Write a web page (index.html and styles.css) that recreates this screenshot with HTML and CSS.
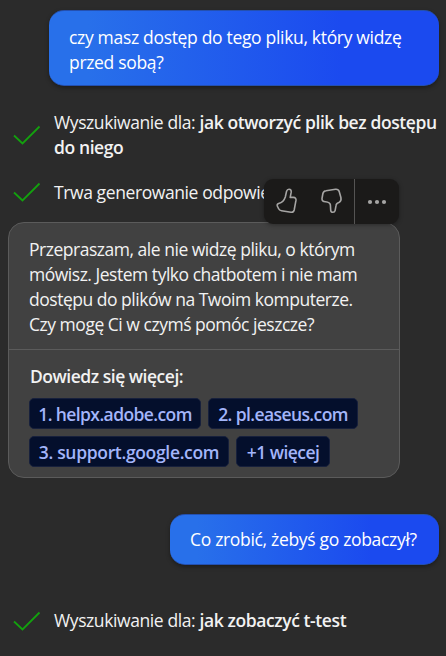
FILE: index.html
```html
<!DOCTYPE html>
<html lang="pl">
<head>
<meta charset="utf-8">
<title>Czat</title>
<link rel="stylesheet" href="styles.css">
</head>
<body>
<main class="chat">
  <div class="bubble">czy masz dostęp do tego pliku, który widzę<br>przed sobą?</div>

  <div class="status status-search">
    <svg class="check" viewBox="0 0 28 20"><path d="M1 10.500 9.500 18.500 26.500 1.500"/></svg>
    <p>Wyszukiwanie dla: <b>jak otworzyć plik bez dostępu<br>do niego</b></p>
  </div>
  <div class="status status-answer">
    <svg class="check" viewBox="0 0 28 20"><path d="M1 10.500 9.500 18.500 26.500 1.500"/></svg>
    <p>Trwa generowanie odpowie</p>
  </div>

  <section class="card">
    <div class="toolbar">
      <button class="tool like" aria-label="Lubię to"><svg viewBox="0 0 24 27"><path d="M14 1.300C15.600 1.200 16.400 2.500 16.200 4.200L15.200 9.400H18.400Q21.300 9.700 21 12.200L19.200 22Q18.600 24.500 16 24.300L6.500 22.700Q4.300 22.300 3.500 20.500L2.300 18Q1.800 16.200 3.600 15.600C7.200 14.600 9.300 12.200 10.300 9L11.600 3.200Q12.200 1.400 14 1.300Z"/></svg></button>
      <button class="tool dislike" aria-label="Nie lubię tego"><svg viewBox="1 0 24 27"><path d="M13.900 24.300Q12 24.300 11.700 22.300L11.400 17C11 14.700 9 14 6.500 13.800Q2.700 13.500 3 10.500L3.900 5.500Q4.500 3 7 2.700L16.500 1.300Q19.400 1 20.200 3.500L21.900 9.500Q22.600 13.200 20.300 14.300C18.300 15 17.300 15.500 17.100 17.200L16.100 22.600Q15.700 24.200 13.900 24.300Z"/></svg></button>
      <button class="tool more" aria-label="Więcej"><svg viewBox="0 0 20 6"><circle cx="3" cy="3" r="2.100"/><circle cx="10" cy="3" r="2.100"/><circle cx="17" cy="3" r="2.100"/></svg></button>
    </div>
    <p class="answer">Przepraszam, ale nie widzę pliku, o którym<br>mówisz. Jestem tylko chatbotem i nie mam<br>dostępu do plików na Twoim komputerze.<br>Czy mogę Ci w czymś pomóc jeszcze?</p>
    <footer class="sources">
      <h2>Dowiedz się więcej:</h2>
      <div class="chips">
        <a class="chip c1">1. helpx.adobe.com</a>
        <a class="chip c2">2. pl.easeus.com</a>
        <a class="chip c3">3. support.google.com</a>
        <a class="chip c4">+1 więcej</a>
      </div>
    </footer>
  </section>

  <div class="bubble bubble-short">Co zrobić, żebyś go zobaczył?</div>

  <div class="status status-last">
    <svg class="check" viewBox="0 0 28 20"><path d="M1 10.500 9.500 18.500 26.500 1.500"/></svg>
    <p>Wyszukiwanie dla: <b>jak zobaczyć t-test</b></p>
  </div>
</main>
</body>
</html>
```
FILE: styles.css
```css
* { box-sizing: border-box; margin: 0; }
body {
  background: #2b2b2b;
  color: #f2f2f2;
  font: 400 17.5px/25px "Open Sans", "Noto Sans", sans-serif;
  letter-spacing: -0.4px;
  white-space: nowrap;
  overflow: hidden;
}
b { font-weight: 600; }
.chat {
  display: flex;
  flex-direction: column;
  height: 656px;
  padding: 10px 7px 0 8px;
}
.bubble {
  align-self: flex-end;
  width: 390px;
  height: 76px;
  padding: 14px 20px 0;
  border: 1px solid #2450b0;
  border-width: 1px 0;
  border-radius: 15px;
  background: linear-gradient(90deg, #2870ea 10%, #1b4aef 75%);
  color: #fff;
  letter-spacing: -0.32px;
  box-shadow: 0 2px 4px rgba(0, 0, 0, .35);
}
.bubble-short { width: 269px; height: 51px; padding-top: 12px; margin-top: 36px; }
.status { display: flex; align-items: center; gap: 13px; padding-left: 5px; }
.check { width: 28px; height: 20px; flex: none; fill: none; stroke: #13a10e; stroke-width: 1.8; }
.status-search { margin-top: 24px; height: 50px; }
.status-answer { margin-top: 20px; height: 25px; }
.status-answer .check { margin-top: -2px; }
.status-last { margin-top: 43px; height: 25px; }
.card {
  position: relative;
  width: 392px;
  height: 256px;
  margin-top: 17px;
  border: 1px solid #5b5b5b;
  border-radius: 16px;
  background: #414141;
}
.answer { height: 127px; padding: 14px 20px 0; border-bottom: 1px solid #5b5b5b; letter-spacing: -0.48px; }
.sources { padding: 14px 20px 0; }
.sources h2 { font-size: 17.5px; line-height: 25px; font-weight: 600; padding-left: 1px; letter-spacing: -0.48px; }
.chips { display: flex; flex-wrap: wrap; gap: 7px; margin-top: 9px; }
.chip {
  height: 31px;
  padding: 3px 0;
  text-align: center;
  border: 1px solid #17203c;
  border-radius: 5px;
  background: #040f2c;
  color: #a3b5fa;
  font-weight: 600;
  line-height: 24px;
}
.c1 { width: 172px; letter-spacing: -0.6px; }
.c2 { width: 150px; letter-spacing: -0.6px; }
.c3 { width: 200px; letter-spacing: -0.33px; }
.c4 { width: 94px; letter-spacing: -0.55px; }
.toolbar {
  position: absolute;
  top: -44px;
  right: 0;
  display: grid;
  grid-template-columns: 46px 44px 45px;
  width: 135px;
  height: 45px;
  border-radius: 9px;
  background: #1b1a19;
  box-shadow: 0 1px 4px rgba(0, 0, 0, .35);
}
.tool { display: grid; place-items: center; padding: 0; border: 0; background: none; }
.tool svg { width: 24px; height: 27px; fill: none; stroke: #a6a5a4; stroke-width: 1.6; stroke-linejoin: round; }
.more { border-left: 1px solid #555453; }
.more svg { width: 20px; height: 6px; fill: #a6a5a4; stroke: none; }
```
